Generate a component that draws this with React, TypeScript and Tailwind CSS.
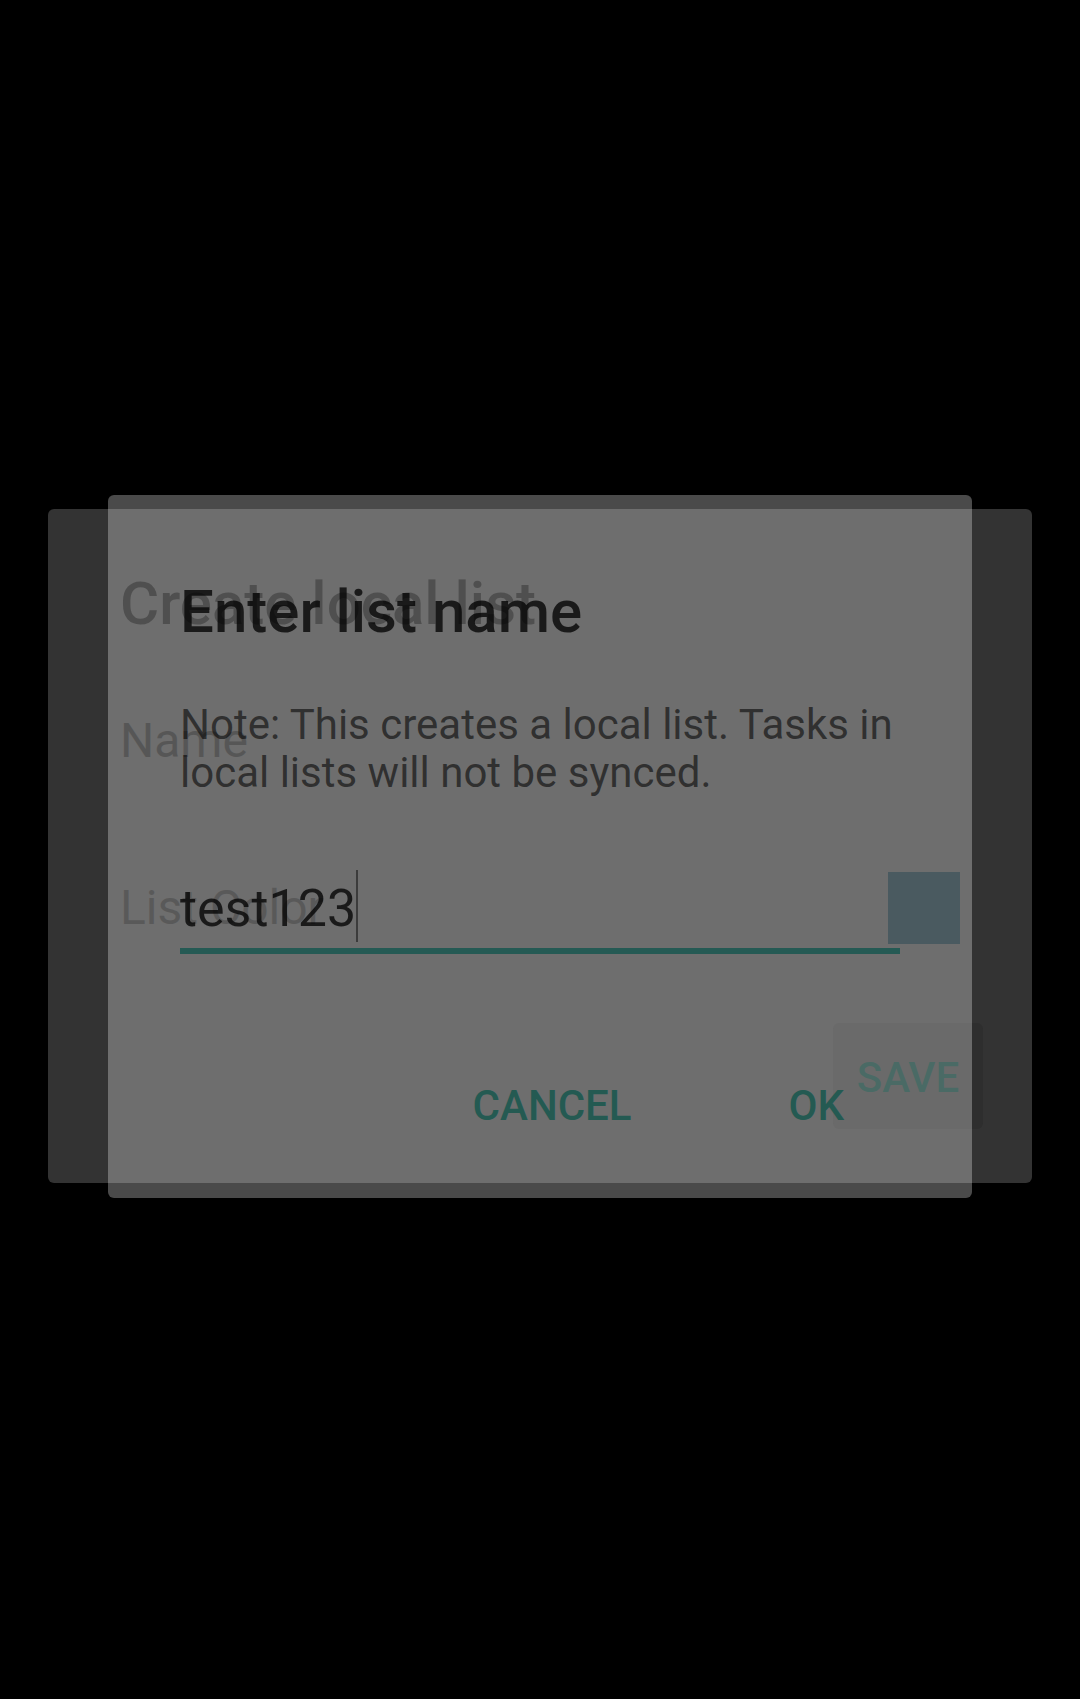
import React from 'react'

// two stacked dialogs: the "Create local list" sheet behind, the name prompt in front
export default function App() {
  return (
    <div className="relative w-[1080px] h-[1699px] bg-black overflow-hidden font-['Roboto','Liberation_Sans',sans-serif]">
      <div className="pt-[509px] px-[48px]">
        <div className="h-[674px] rounded-[6px] bg-[#333333] flex flex-col pl-[72px] pr-[72px]">
          <p className="mt-[65px] text-[60px] leading-none font-medium text-[#080808]">Create local list</p>
          <p className="mt-[83px] text-[48px] leading-none text-[#111111]">Name</p>
          <div className="mt-[107px] flex items-center justify-between">
            <p className="text-[48px] leading-none text-[#161616]">List Color</p>
            <div className="w-[72px] h-[72px] bg-[#01171f]" />
          </div>
          <div className="mt-[79px] flex justify-end -mr-[23px]">
            <div className="w-[150px] h-[106px] rounded-[6px] bg-[#2e2e2e] flex items-center justify-center">
              <span className="text-[42px] leading-none font-medium text-[#002e27] translate-y-[2px]">SAVE</span>
            </div>
          </div>
        </div>
      </div>

      <div className="absolute left-[108px] top-[495px] w-[864px] h-[703px] rounded-[6px] bg-[rgba(255,255,255,0.29)] flex flex-col px-[72px]">
        <p className="mt-[87px] text-[60px] leading-none font-medium text-[rgba(0,0,0,0.76)]">Enter list name</p>
        <p className="mt-[59px] text-[42px] leading-[48px] text-[rgba(0,0,0,0.58)]">
          Note: This creates a local list. Tasks in local lists will not be synced.
        </p>
        <div className="mt-[83px] w-[720px] border-b-[6px] border-[#255a54] h-[74px] flex items-start">
          <span className="text-[52px] leading-none text-[rgba(0,0,0,0.76)] mt-[3px]">test123</span>
          <span className="w-[2px] h-[72px] bg-[rgba(0,0,0,0.45)] -mt-[10px]" />
        </div>
        <div className="mt-[131px] flex justify-end gap-[157px] pr-[56px]">
          <span className="text-[42px] leading-none font-medium text-[#245a52]">CANCEL</span>
          <span className="text-[42px] leading-none font-medium text-[#245a52]">OK</span>
        </div>
      </div>
    </div>
  )
}
